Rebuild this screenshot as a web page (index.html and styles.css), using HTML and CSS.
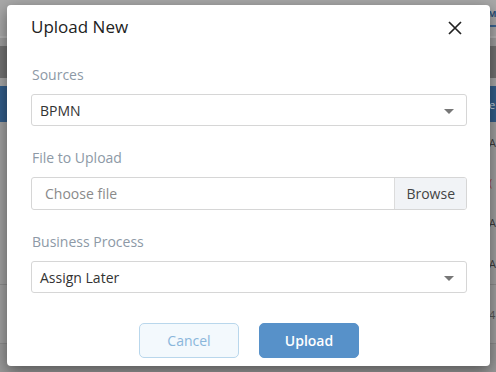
FILE: index.html
```html
<!DOCTYPE html>
<html lang="en">
<head>
  <meta charset="UTF-8">
  <title>Upload New</title>
  <link rel="stylesheet" href="styles.css">
</head>
<body>

<div class="page">
  <div class="band band-top"><span class="tab-text">M</span></div>
  <div class="band band-line"></div>
  <div class="band band-mid"></div>
  <div class="band band-dark"></div>
  <div class="band band-gap"></div>
  <div class="band band-head"><span class="cell">e</span></div>
  <div class="row"><span class="cell">A</span></div>
  <div class="row"><span class="cell cell-red">(</span></div>
  <div class="row"><span class="cell">A</span></div>
  <div class="row row-last"><span class="cell">A</span></div>
  <div class="row row-tall"><span class="cell cell-light">4</span></div>
  <div class="row row-end"></div>
</div>

<div class="modal">
  <div class="modal-header">
    <h2 class="modal-title">Upload New</h2>
    <button class="close-button" aria-label="Close">
      <svg width="14" height="14" viewBox="0 0 14 14">
        <path d="M1 1 L13 13 M13 1 L1 13" stroke="#222" stroke-width="1.7" fill="none"/>
      </svg>
    </button>
  </div>

  <div class="modal-body">
    <div class="field">
      <label class="field-label">Sources</label>
      <div class="select-box">
        <span class="select-value">BPMN</span>
        <span class="caret"></span>
      </div>
    </div>

    <div class="field">
      <label class="field-label">File to Upload</label>
      <div class="file-box">
        <span class="file-placeholder">Choose file</span>
        <span class="file-browse">Browse</span>
      </div>
    </div>

    <div class="field">
      <label class="field-label">Business Process</label>
      <div class="select-box">
        <span class="select-value">Assign Later</span>
        <span class="caret"></span>
      </div>
    </div>
  </div>

  <div class="modal-footer">
    <button class="btn btn-cancel">Cancel</button>
    <button class="btn btn-upload">Upload</button>
  </div>
</div>

</body>
</html>
```

FILE: styles.css
```css
body {
    margin: 0;
    padding: 0;
    background: #a2a2a2;
    font-family: 'Open Sans', 'Noto Sans', sans-serif;
    width: 496px;
    height: 372px;
    overflow: hidden;
    position: relative;
}

/* dimmed page behind the dialog */
.page {
    display: flex;
    flex-direction: column;
    width: 496px;
    height: 372px;
    background: #a2a2a2;
}

.band {
    flex: none;
    overflow: hidden;
    white-space: nowrap;
}

.band-top {
    height: 36px;
    background: #a8a8a8;
}

.tab-text {
    display: inline-block;
    margin-left: 488px;
    padding-top: 7px;
    padding-bottom: 5px;
    font-size: 9px;
    font-weight: 700;
    color: #2b4f78;
    border-bottom: 2px solid #3a6594;
}

.band-line {
    height: 2px;
    background: #b2b2b2;
}

.band-mid {
    height: 8px;
    background: #9d9d9d;
}

.band-dark {
    height: 32px;
    background: #727272;
}

.band-gap {
    height: 8px;
    background: #a6a6a6;
}

.band-head {
    height: 36px;
    background: #335d89;
    display: flex;
    align-items: center;
}

.band-head .cell {
    color: #c9d3de;
}

.row {
    flex: none;
    height: 40px;
    display: flex;
    align-items: center;
    white-space: nowrap;
    overflow: hidden;
    background: #a0a0a0;
}

.row-last {
    height: 42px;
    border-bottom: 1px solid #8c8c8c;
}

.row-tall {
    height: 58px;
    border-bottom: 1px solid #8c8c8c;
}

.row-end {
    flex: 1;
    background: #999;
}

.cell {
    margin-left: 489px;
    font-size: 11px;
    color: #3a3a3a;
}

.cell-red {
    color: #a5443f;
}

.cell-light {
    color: #555;
}

/* dialog */
.modal {
    position: absolute;
    left: 7px;
    top: 5px;
    width: 483px;
    height: 361px;
    box-sizing: border-box;
    background: #fff;
    border-radius: 4px;
    box-shadow: 0 5px 15px rgba(0, 0, 0, 0.45);
    padding: 10px 23px 0 24px;
    display: flex;
    flex-direction: column;
}

.modal-header {
    display: flex;
    align-items: center;
    justify-content: space-between;
    height: 24px;
}

.modal-title {
    margin: 0;
    font-size: 17px;
    line-height: 24px;
    font-weight: 400;
    color: #222;
}

.close-button {
    background: none;
    border: none;
    padding: 0;
    margin-right: 5px;
    margin-top: 1px;
    width: 14px;
    height: 14px;
    cursor: pointer;
    display: flex;
}

.modal-body {
    margin-top: 26px;
}

.field {
    margin-bottom: 22px;
}

.field-label {
    display: block;
    font-size: 14px;
    line-height: 20px;
    color: #8d99a6;
    margin-bottom: 9px;
    padding-left: 1px;
}

.select-box {
    height: 32px;
    box-sizing: border-box;
    border: 1px solid #d6d6d6;
    border-radius: 3px;
    display: flex;
    align-items: center;
    justify-content: space-between;
    padding: 0 12px 0 8px;
}

.select-value {
    font-size: 14px;
    color: #333;
}

.caret {
    width: 0;
    height: 0;
    border-left: 5px solid transparent;
    border-right: 5px solid transparent;
    border-top: 5px solid #777;
    margin-top: 2px;
}

.file-box {
    height: 33px;
    box-sizing: border-box;
    border: 1px solid #d6d6d6;
    border-radius: 3px;
    display: flex;
    align-items: stretch;
    overflow: hidden;
}

.file-placeholder {
    flex: 1;
    display: flex;
    align-items: center;
    padding-left: 13px;
    font-size: 14px;
    color: #8a8a8a;
}

.file-browse {
    display: flex;
    align-items: center;
    padding: 0 11px 0 11px;
    background: #f1f3f6;
    border-left: 1px solid #dcdcdc;
    font-size: 14px;
    color: #444;
}

.modal-footer {
    display: flex;
    justify-content: center;
    gap: 20px;
    margin-top: 8px;
}

.btn {
    width: 100px;
    height: 35px;
    box-sizing: border-box;
    border-radius: 5px;
    font-family: 'Open Sans', 'Noto Sans', sans-serif;
    font-size: 14px;
    cursor: pointer;
}

.btn-cancel {
    background: #f3f9fd;
    border: 1px solid #b9d7ec;
    color: #8ab6db;
}

.btn-upload {
    background: #5791c9;
    border: 1px solid #5791c9;
    color: #fff;
    font-weight: 600;
}
```
